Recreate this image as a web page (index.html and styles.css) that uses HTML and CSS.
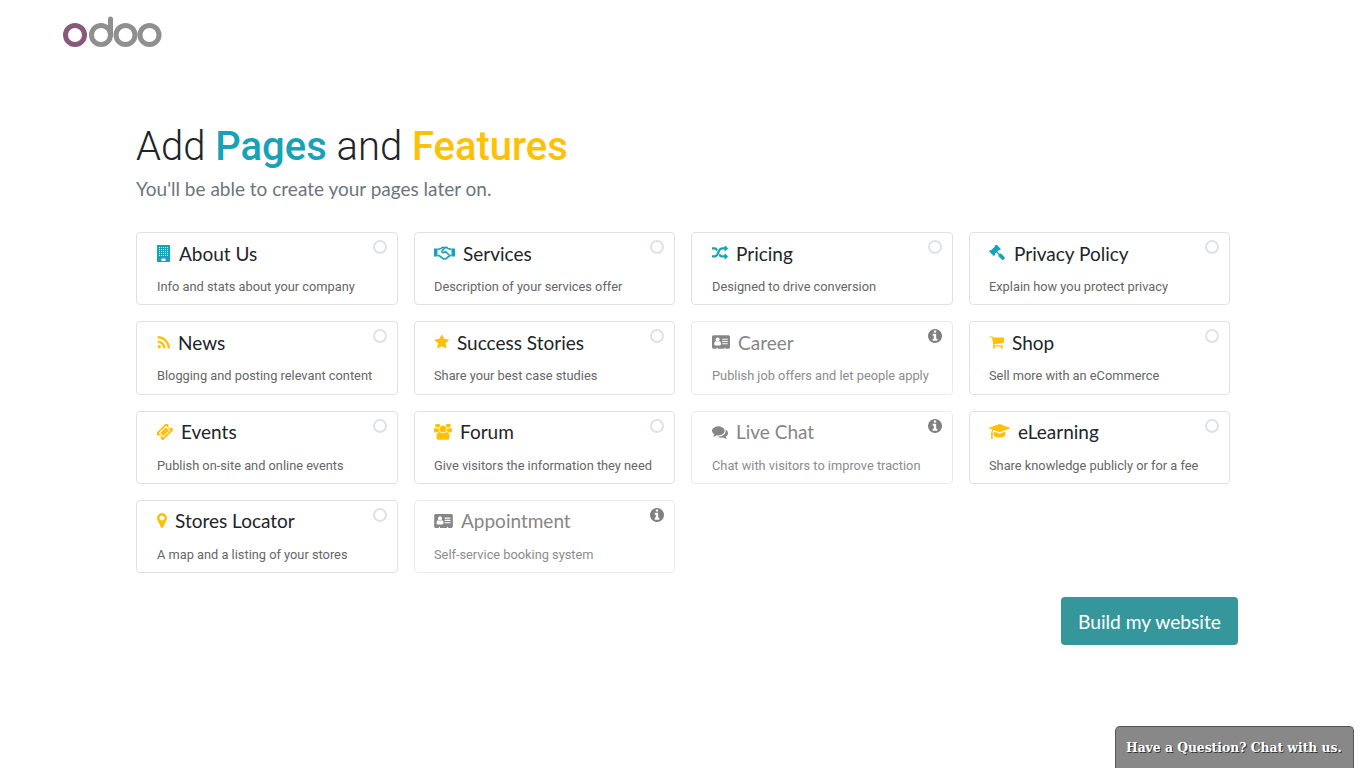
FILE: index.html
```html
<!DOCTYPE html>
<html lang="en">
<head>
  <meta charset="UTF-8">
  <meta name="viewport" content="width=device-width, initial-scale=1.0">
  <title>Add Pages and Features | Odoo</title>
  <link rel="stylesheet" href="styles.css">
</head>
<body>
  <header class="topbar">
    <svg class="logo" width="100" height="32" viewBox="0 0 100 32" aria-label="odoo">
      <circle class="logo-o" cx="12" cy="19" r="9.5"/>
      <circle class="logo-g" cx="38" cy="19" r="9.5"/>
      <path class="logo-g" d="M47.5 19V3" stroke-linecap="round"/>
      <circle class="logo-g" cx="62.5" cy="19" r="9.5"/>
      <circle class="logo-g" cx="86.5" cy="19" r="9.5"/>
    </svg>
  </header>

  <main class="container">
    <h1>Add <b class="teal">Pages</b> and <b class="amber">Features</b></h1>
    <p class="lead">You'll be able to create your pages later on.</p>

    <div class="grid">
      <div class="card">
        <h2>
          <svg class="icon teal" width="14" height="17" viewBox="0 0 13 17" preserveAspectRatio="xMinYMid"><path d="M0 0h13v17H0z"/><path class="win" d="M2 2h1v1H2zm2 0h1v1H4zm2 0h1v1H6zm2 0h1v1H8zm2 0h1v1h-1zM2 4h1v1H2zm2 0h1v1H4zm2 0h1v1H6zm2 0h1v1H8zm2 0h1v1h-1zM2 6h1v1H2zm2 0h1v1H4zm2 0h1v1H6zm2 0h1v1H8zm2 0h1v1h-1zM2 8h1v1H2zm2 0h1v1H4zm2 0h1v1H6zm2 0h1v1H8zm2 0h1v1h-1zM2 10h1v1H2zm2 0h1v1H4zm2 0h1v1H6zm2 0h1v1H8zm2 0h1v1h-1z"/><path class="door" d="M4.500 13.500h4V16h-4z"/></svg>
          About Us
        </h2>
        <p>Info and stats about your company</p>
        <span class="radio"></span>
      </div>
      <div class="card">
        <h2>
          <svg class="icon teal" width="21" height="14" viewBox="0 0 21 14"><path d="M0 2.500h3.500v8H0zM17.500 2.500H21v8h-3.500z"/><path class="line" d="M3.500 3.500 7 2.500Q9 .8 10.500 1.800 12.500 .8 14 2.500l3.500 1M3.500 9.500H5l4 3q1.500 1 3 0l4-3h1.500M11 2 8 5q-.5 2 2 1.500L11.500 5.500l4 4"/></svg>
          Services
        </h2>
        <p>Description of your services offer</p>
        <span class="radio"></span>
      </div>
      <div class="card">
        <h2>
          <svg class="icon teal" width="16" height="14" viewBox="0 112 1792 1568"><path d="M666 481q-60 92-137 273-22-45-37-72.500t-40.500-63.500-51-56.500-63-35-81.500-14.500h-224q-14 0-23-9t-9-23v-192q0-14 9-23t23-9h224q250 0 410 225zm1126 799q0 14-9 23l-320 320q-9 9-23 9-13 0-22.500-9.500t-9.500-22.500v-192q-32 0-85 .5t-81 1-73-1-71-5-64-10.500-63-18.500-58-28.500-59-40-55-53.500-56-69.500q59-93 136-273 22 45 37 72.500t40.500 63.500 51 56.500 63 35 81.500 14.500h256v-192q0-14 9-23t23-9q12 0 24 10l319 319q9 9 9 23zm0-896q0 14-9 23l-320 320q-9 9-23 9-13 0-22.500-9.500t-9.500-22.500v-192h-256q-48 0-87 15t-69 45-51 61.500-45 77.500q-32 62-78 171-29 66-49.500 111t-54 105-64 100-74 83-90 68.500-106.500 42-128 16.500h-224q-14 0-23-9t-9-23v-192q0-14 9-23t23-9h224q48 0 87-15t69-45 51-61.500 45-77.500q32-62 78-171 29-66 49.500-111t54-105 64-100 74-83 90-68.500 106.500-42 128-16.500h256v-192q0-14 9-23t23-9q12 0 24 10l319 319q9 9 9 23z"/></svg>
          Pricing
        </h2>
        <p>Designed to drive conversion</p>
        <span class="radio"></span>
      </div>
      <div class="card">
        <h2>
          <svg class="icon teal" width="17" height="16" viewBox="0 0 1792 1792" preserveAspectRatio="xMinYMid"><path d="M1771 1440q0 53-37 90l-107 108q-39 37-91 37-53 0-90-37l-363-364q-38-36-38-90 0-53 43-96l-256-256-126 126q-14 14-34 14t-34-14q2 2 12.500 12t12.500 13 10 11.500 10 13.500 6 13.500 5.500 16.500 1.500 18q0 38-28 68-3 3-16.500 18t-19 20.500-18.500 16.500-22 15.500-22 9-26 4.500q-40 0-68-28l-408-408q-28-28-28-68 0-13 4.500-26t9-22 15.500-22 16.500-18.500 20.500-19 18-16.500q30-28 68-28 10 0 18 1.500t16.500 5.500 13.500 6 13.500 10 11.500 10 13 12.500 12 12.500q-14-14-14-34t14-34l348-348q14-14 34-14t34 14q-2-2-12.500-12t-12.500-13-10-11.500-10-13.500-6-13.500-5.500-16.500-1.500-18q0-38 28-68 3-3 16.500-18t19-20.500 18.500-16.500 22-15.500 22-9 26-4.500q40 0 68 28l408 408q28 28 28 68 0 13-4.500 26t-9 22-15.500 22-16.500 18.500-20.500 19-18 16.500q-30 28-68 28-10 0-18-1.500t-16.500-5.500-13.500-6-13.500-10-11.500-10-13-12.500-12-12.500q14 14 14 34t-14 34l-126 126 256 256q43-43 96-43 52 0 91 37l363 363q37 39 37 91z"/></svg>
          Privacy Policy
        </h2>
        <p>Explain how you protect privacy</p>
        <span class="radio"></span>
      </div>

      <div class="card">
        <h2>
          <svg class="icon amber" width="13" height="13" viewBox="128 128 1472 1472"><path d="M576 1344q0 80-56 136t-136 56-136-56-56-136 56-136 136-56 136 56 56 136zm512 123q2 28-17 48-18 21-47 21h-135q-25 0-43-16.500t-20-41.500q-22-229-184.500-391.500t-391.500-184.500q-25-2-41.500-20t-16.500-43v-135q0-29 21-47 17-17 43-17h5q160 13 306 80.500t259 181.500q114 113 181.500 259t80.500 306zm512 2q2 27-18 47-18 20-46 20h-143q-26 0-44.500-17.500t-19.500-42.500q-12-215-101-408.500t-231.500-336-336-231.500-408.500-102q-25-1-42.500-19.500t-17.500-43.500v-143q0-28 20-46 18-18 44-18h3q262 13 501.500 120t425.500 294q187 186 294 425.500t120 501.500z"/></svg>
          News
        </h2>
        <p>Blogging and posting relevant content</p>
        <span class="radio"></span>
      </div>
      <div class="card">
        <h2>
          <svg class="icon amber" width="15" height="15" viewBox="0 128 1728 1650"><path d="M1728 647q0 22-26 48l-363 354 86 500q1 7 1 20 0 21-10.500 35.500t-30.500 14.500q-19 0-40-12l-449-236-449 236q-22 12-40 12-21 0-31.500-14.500t-10.500-35.500q0-6 2-20l86-500-364-354q-25-27-25-48 0-37 56-46l502-73 225-455q19-41 49-41t49 41l225 455 502 73q56 9 56 46z"/></svg>
          Success Stories
        </h2>
        <p>Share your best case studies</p>
        <span class="radio"></span>
      </div>
      <div class="card off">
        <h2>
          <svg class="icon" width="18" height="14" viewBox="0 128 2048 1536"><path d="M1024 1131q0-64-9-117.500t-29.500-103-60.500-78-97-28.500q-6 4-30 18t-37.500 21.500-35.500 17.500-43 14.500-42 4.500-42-4.500-43-14.500-35.500-17.500-37.500-21.500-30-18q-57 0-97 28.500t-60.500 78-29.500 103-9 117.500 37 106.500 91 42.500h512q54 0 91-42.500t37-106.500zm-157-520q0-94-66.500-160.500t-160.500-66.500-160.500 66.500-66.500 160.500 66.500 160.500 160.500 66.500 160.500-66.500 66.500-160.500zm925 509v-64q0-14-9-23t-23-9h-576q-14 0-23 9t-9 23v64q0 14 9 23t23 9h576q14 0 23-9t9-23zm0-260v-56q0-15-10.500-25.500t-25.500-10.500h-568q-15 0-25.500 10.500t-10.500 25.500v56q0 15 10.500 25.500t25.500 10.500h568q15 0 25.500-10.500t10.500-25.500zm0-252v-64q0-14-9-23t-23-9h-576q-14 0-23 9t-9 23v64q0 14 9 23t23 9h576q14 0 23-9t9-23zm256-320v1216q0 66-47 113t-113 47h-352v-96q0-14-9-23t-23-9h-64q-14 0-23 9t-9 23v96h-768v-96q0-14-9-23t-23-9h-64q-14 0-23 9t-9 23v96h-352q-66 0-113-47t-47-113v-1216q0-66 47-113t113-47h1728q66 0 113 47t47 113z"/></svg>
          Career
        </h2>
        <p>Publish job offers and let people apply</p>
        <svg class="info" width="14" height="14" viewBox="128 128 1536 1536"><path d="M1152 1376v-160q0-14-9-23t-23-9h-96v-512q0-14-9-23t-23-9h-320q-14 0-23 9t-9 23v160q0 14 9 23t23 9h96v320h-96q-14 0-23 9t-9 23v160q0 14 9 23t23 9h448q14 0 23-9t9-23zm-128-896v-160q0-14-9-23t-23-9h-192q-14 0-23 9t-9 23v160q0 14 9 23t23 9h192q14 0 23-9t9-23zm640 416q0 209-103 385.500t-279.500 279.500-385.500 103-385.500-103-279.500-279.500-103-385.500 103-385.500 279.500-279.500 385.500-103 385.500 103 279.500 279.500 103 385.500z"/></svg>
      </div>
      <div class="card">
        <h2>
          <svg class="icon amber" width="15" height="14" viewBox="0 128 1728 1536"><path d="M704 1536q0 52-38 90t-90 38-90-38-38-90 38-90 90-38 90 38 38 90zm896 0q0 52-38 90t-90 38-90-38-38-90 38-90 90-38 90 38 38 90zm128-1088v512q0 24-16.500 42.500t-40.500 21.500l-1044 122q13 60 13 70 0 16-24 64h920q26 0 45 19t19 45-19 45-45 19h-1024q-26 0-45-19t-19-45q0-11 8-31.500t16-36 21.500-40 15.500-29.500l-177-823h-204q-26 0-45-19t-19-45 19-45 45-19h256q16 0 28.500 6.500t19.500 15.500 13 24.500 8 26 5.500 29.500 4.500 26h1201q26 0 45 19t19 45z"/></svg>
          Shop
        </h2>
        <p>Sell more with an eCommerce</p>
        <span class="radio"></span>
      </div>

      <div class="card">
        <h2>
          <svg class="icon amber" width="16" height="16" viewBox="128 128 1600 1600"><path d="M1024 452l316 316-572 572-316-316zm-211 979l618-618q19-19 19-45t-19-45l-362-362q-18-18-45-18t-45 18l-618 618q-19 19-19 45t19 45l362 362q18 18 45 18t45-18zm889-637l-907 908q-37 37-90.500 37t-90.500-37l-126-126q56-56 56-136t-56-136-136-56-136 56l-125-126q-37-37-37-90.500t37-90.500l907-906q37-37 90.500-37t90.500 37l125 125q-56 56-56 136t56 136 136 56 136-56l126 125q37 37 37 90.500t-37 90.500z"/></svg>
          Events
        </h2>
        <p>Publish on-site and online events</p>
        <span class="radio"></span>
      </div>
      <div class="card">
        <h2>
          <svg class="icon amber" width="18" height="16" viewBox="0 128 1920 1664"><path d="M593 896q-162 5-265 128h-134q-82 0-138-40.500t-56-118.500q0-353 124-353 6 0 43.500 21t97.500 42.500 119 21.500q67 0 133-23-5 37-5 66 0 139 81 256zm1071 637q0 120-73 189.500t-194 69.500h-874q-121 0-194-69.500t-73-189.500q0-53 3.500-103.500t14-109 26.500-108.500 43-97.500 62-81 85.500-53.500 111.500-20q10 0 43 21.500t73 48 107 48 135 21.500 135-21.500 107-48 73-48 43-21.500q61 0 111.500 20t85.500 53.500 62 81 43 97.500 26.500 108.500 14 109 3.500 103.500zm-1024-1277q0 106-75 181t-181 75-181-75-75-181 75-181 181-75 181 75 75 181zm704 384q0 159-112.500 271.500t-271.500 112.500-271.500-112.500-112.500-271.500 112.500-271.500 271.500-112.500 271.500 112.500 112.500 271.500zm576 225q0 78-56 118.500t-138 40.500h-134q-103-123-265-128 81-117 81-256 0-29-5-66 66 23 133 23 59 0 119-21.500t97.500-42.500 43.500-21q124 0 124 353zm-128-609q0 106-75 181t-181 75-181-75-75-181 75-181 181-75 181 75 75 181z"/></svg>
          Forum
        </h2>
        <p>Give visitors the information they need</p>
        <span class="radio"></span>
      </div>
      <div class="card off">
        <h2>
          <svg class="icon" width="16" height="14" viewBox="0 128 1792 1536"><path d="M1408 768q0 139-94 257t-256.500 186.500-353.500 68.500q-86 0-176-16-124 88-278 128-36 9-86 16h-3q-11 0-20.500-8t-11.500-21q-1-3-1-6.500t.5-6.500 2-6l2.500-5 3.500-5.500 4-5 4.500-5 4-4.500q5-6 23-25t26-29.500 22.500-29 25-38.500 20.500-44q-124-72-195-177t-71-224q0-139 94-257t256.500-186.500 353.500-68.500 353.500 68.500 256.500 186.500 94 257zm384 256q0 120-71 224.500t-195 176.500q10 24 20.500 44t25 38.500 22.500 29 26 29.500 23 25q1 1 4 4.500t4.500 5 4 5 3.500 5.500l2.500 5 2 6 .5 6.500-1 6.500q-3 14-13 22t-22 7q-50-7-86-16-154-40-278-128-90 16-176 16-271 0-472-132 58 4 88 4 161 0 309-45t264-129q125-92 192-212t67-254q0-77-23-152 129 71 204 178t75 230z"/></svg>
          Live Chat
        </h2>
        <p>Chat with visitors to improve traction</p>
        <svg class="info" width="14" height="14" viewBox="128 128 1536 1536"><path d="M1152 1376v-160q0-14-9-23t-23-9h-96v-512q0-14-9-23t-23-9h-320q-14 0-23 9t-9 23v160q0 14 9 23t23 9h96v320h-96q-14 0-23 9t-9 23v160q0 14 9 23t23 9h448q14 0 23-9t9-23zm-128-896v-160q0-14-9-23t-23-9h-192q-14 0-23 9t-9 23v160q0 14 9 23t23 9h192q14 0 23-9t9-23zm640 416q0 209-103 385.500t-279.500 279.500-385.500 103-385.500-103-279.500-279.500-103-385.500 103-385.500 279.500-279.500 385.500-103 385.500 103 279.500 279.500 103 385.500z"/></svg>
      </div>
      <div class="card">
        <h2>
          <svg class="icon amber" width="21" height="15" viewBox="0 128 2304 1408" preserveAspectRatio="none"><path d="M1774 836l18 316q4 69-82 128t-235 93.500-323 34.500-323-34.500-235-93.500-82-128l18-316 574 181q22 7 48 7t48-7zm530-324q0 23-22 31l-1120 352q-4 1-10 1t-10-1l-652-206q-43 34-71 111.500t-34 178.500q63 36 63 109 0 69-58 107l58 433q2 14-8 25-9 11-24 11h-192q-15 0-24-11-10-11-8-25l58-433q-58-38-58-107 0-73 65-111 11-207 98-330l-333-104q-22-8-22-31t22-31l1120-352q4-1 10-1t10 1l1120 352q22 8 22 31z"/></svg>
          eLearning
        </h2>
        <p>Share knowledge publicly or for a fee</p>
        <span class="radio"></span>
      </div>

      <div class="card">
        <h2>
          <svg class="icon amber" width="10" height="15" viewBox="0 128 1024 1536"><path d="M768 640q0-106-75-181t-181-75-181 75-75 181 75 181 181 75 181-75 75-181zm256 0q0 109-33 179l-364 774q-16 33-47.500 52t-67.500 19-67.500-19-46.500-52l-365-774q-33-70-33-179 0-212 150-362t362-150 362 150 150 362z"/></svg>
          Stores Locator
        </h2>
        <p>A map and a listing of your stores</p>
        <span class="radio"></span>
      </div>
      <div class="card off">
        <h2>
          <svg class="icon" width="19" height="14" viewBox="0 128 2048 1536"><path d="M1024 1131q0-64-9-117.500t-29.500-103-60.500-78-97-28.500q-6 4-30 18t-37.500 21.500-35.500 17.500-43 14.500-42 4.500-42-4.500-43-14.500-35.500-17.500-37.500-21.500-30-18q-57 0-97 28.500t-60.500 78-29.500 103-9 117.500 37 106.500 91 42.500h512q54 0 91-42.500t37-106.500zm-157-520q0-94-66.500-160.500t-160.500-66.500-160.500 66.500-66.500 160.500 66.500 160.500 160.500 66.500 160.500-66.500 66.500-160.500zm925 509v-64q0-14-9-23t-23-9h-576q-14 0-23 9t-9 23v64q0 14 9 23t23 9h576q14 0 23-9t9-23zm0-260v-56q0-15-10.500-25.500t-25.500-10.500h-568q-15 0-25.500 10.500t-10.500 25.500v56q0 15 10.500 25.500t25.500 10.500h568q15 0 25.500-10.500t10.500-25.500zm0-252v-64q0-14-9-23t-23-9h-576q-14 0-23 9t-9 23v64q0 14 9 23t23 9h576q14 0 23-9t9-23zm256-320v1216q0 66-47 113t-113 47h-352v-96q0-14-9-23t-23-9h-64q-14 0-23 9t-9 23v96h-768v-96q0-14-9-23t-23-9h-64q-14 0-23 9t-9 23v96h-352q-66 0-113-47t-47-113v-1216q0-66 47-113t113-47h1728q66 0 113 47t47 113z"/></svg>
          Appointment
        </h2>
        <p>Self-service booking system</p>
        <svg class="info" width="14" height="14" viewBox="128 128 1536 1536"><path d="M1152 1376v-160q0-14-9-23t-23-9h-96v-512q0-14-9-23t-23-9h-320q-14 0-23 9t-9 23v160q0 14 9 23t23 9h96v320h-96q-14 0-23 9t-9 23v160q0 14 9 23t23 9h448q14 0 23-9t9-23zm-128-896v-160q0-14-9-23t-23-9h-192q-14 0-23 9t-9 23v160q0 14 9 23t23 9h192q14 0 23-9t9-23zm640 416q0 209-103 385.500t-279.500 279.500-385.500 103-385.500-103-279.500-279.500-103-385.500 103-385.500 279.500-279.500 385.500-103 385.500 103 279.500 279.500 103 385.500z"/></svg>
      </div>
    </div>

    <div class="actions">
      <button type="button" class="build">Build my website</button>
    </div>
  </main>

  <div class="chat">Have a Question? Chat with us.</div>
</body>
</html>
```

FILE: styles.css
```css
body {
  margin: 0;
  background-color: #fff;
  color: #212529;
  font-family: "Roboto", sans-serif;
}
.topbar {
  height: 48px;
  padding-left: 63px;
}
.logo {
  display: block;
  padding-top: 16px;
  overflow: visible;
}
.logo circle, .logo path {
  fill: none;
  stroke-width: 5;
}
.logo-o {
  stroke: #875a7b;
}
.logo-g {
  stroke: #8f8f8f;
}
.container {
  width: 1094px;
  margin-left: 136px;
}
h1 {
  margin: 75px 0 0;
  font-size: 40px;
  font-weight: 300;
  line-height: 48px;
}
h1 b {
  font-weight: 500;
}
.teal {
  color: #17a2b8;
  fill: #17a2b8;
}
.amber {
  color: #ffc107;
  fill: #ffc107;
}
.lead {
  margin: 6px 0 0;
  font-family: "Lato", sans-serif;
  font-size: 19px;
  line-height: 24px;
  color: #6c757d;
}
.grid {
  display: grid;
  grid-template-columns: 262px 261px 262px 261px;
  grid-auto-rows: 73.25px;
  gap: 16px;
  margin-top: 31.2px;
}
.card {
  position: relative;
  box-sizing: border-box;
  padding: 8px 20px 0;
  border: 1px solid #dee2e6;
  border-radius: 4px;
}
.card:nth-child(2n) {
  padding-left: 19px;
}
.card h2 {
  display: flex;
  align-items: center;
  gap: 8px;
  margin: 0;
  height: 23.8px;
  font-family: "Lato", sans-serif;
  font-size: 19px;
  font-weight: 400;
  white-space: nowrap;
}
.card p {
  margin: 12.2px 0 0;
  font-size: 12.8px;
  line-height: 19px;
  color: #666;
  white-space: nowrap;
}
.icon {
  flex: none;
}
.icon .win {
  fill: #d4f0f5;
}
.icon .door {
  fill: #fff;
}
.icon .line {
  fill: none;
  stroke: #17a2b8;
  stroke-width: 1.6;
}
.radio {
  position: absolute;
  top: 7px;
  right: 10px;
  box-sizing: border-box;
  width: 14px;
  height: 14px;
  border: 2.5px solid #dee2e6;
  border-radius: 50%;
}
.info {
  position: absolute;
  top: 7px;
  right: 10px;
  fill: #808080;
}
.off {
  border-color: #e9ecef;
}
.off h2 {
  color: #868686;
}
.off .icon {
  fill: #868686;
}
.off p {
  color: #8c8c8c;
}
.actions {
  display: flex;
  justify-content: flex-end;
  margin: 24px -8px 0 0;
}
.build {
  width: 177px;
  height: 48px;
  padding: 0;
  border: none;
  border-radius: 4px;
  background-color: #35979c;
  color: #fff;
  font-family: "Lato", sans-serif;
  font-size: 19.2px;
  cursor: pointer;
}
.chat {
  position: fixed;
  right: 12px;
  bottom: 0;
  box-sizing: border-box;
  width: 239px;
  height: 42px;
  padding: 12px 0 0 10px;
  border: 1px solid #555;
  border-bottom: none;
  border-radius: 5px 5px 0 0;
  background-color: #888;
  color: #fff;
  font-family: "DejaVu Serif", serif;
  font-size: 13.7px;
  font-stretch: condensed;
  font-weight: 700;
  line-height: 16px;
  white-space: nowrap;
  text-shadow: 1px 1px 0 #333;
}
```
